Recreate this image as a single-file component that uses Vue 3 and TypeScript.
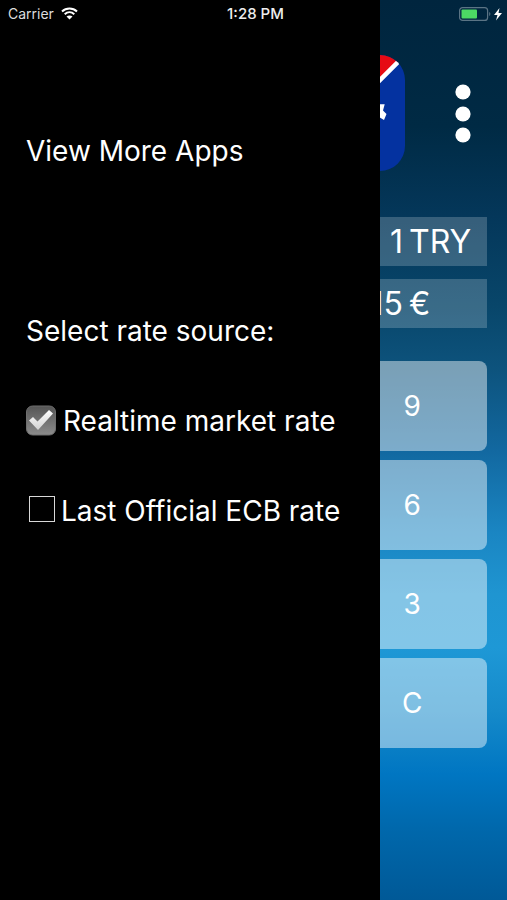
<script setup lang="ts">
import { reactive } from 'vue'

interface Source {
  id: string
  label: string
  on: boolean
}

interface Amount {
  id: string
  value: string
  unit: string
}

const sources = reactive<Source[]>([
  { id: 'realtime', label: 'Realtime market rate', on: true },
  { id: 'ecb', label: 'Last Official ECB rate', on: false },
])

const amounts: Amount[] = [
  { id: 'from', value: '1', unit: 'TRY' },
  { id: 'to', value: '15', unit: '€' },
]

const keys: string[] = ['9', '6', '3', 'C']

function choose(picked: Source): void {
  sources.forEach((s) => {
    s.on = s.id === picked.id
  })
}
</script>

<template>
  <div class="screen">
    <main class="converter">
      <header class="top">
        <svg class="logo" viewBox="0 0 116 116" aria-hidden="true">
          <defs>
            <clipPath id="logo-shape"><rect width="116" height="116" rx="25" /></clipPath>
          </defs>
          <g clip-path="url(#logo-shape)">
            <rect width="116" height="116" fill="#0432a0" />
            <path d="M0 0H116L0 116Z" fill="#e60a14" />
            <path d="M118 -2L-2 118" stroke="#fff" stroke-width="4.500" />
          </g>
          <path d="M88 49.300H95.700L94 55.500L97.500 59L95 65L90 62L88 59Z" fill="#fff" />
        </svg>
        <button class="more" type="button" aria-label="Menu">
          <svg viewBox="0 0 16 60" aria-hidden="true">
            <circle cx="8" cy="9" r="7.600" />
            <circle cx="8" cy="31" r="7.600" />
            <circle cx="8" cy="52" r="7.600" />
          </svg>
        </button>
      </header>

      <section class="amounts">
        <div v-for="a in amounts" :key="a.id" class="amount">
          <span class="value">{{ a.value }}</span>
          <span class="unit">{{ a.unit }}</span>
        </div>
      </section>

      <section class="keypad">
        <button v-for="k in keys" :key="k" class="key" type="button">{{ k }}</button>
      </section>
    </main>

    <aside class="drawer">
      <a class="row" href="#apps">View More Apps</a>
      <h2 class="row heading">Select rate source:</h2>
      <label v-for="s in sources" :key="s.id" class="row" :for="s.id">
        <span class="tick" :class="{ on: s.on }">
          <input :id="s.id" type="checkbox" :checked="s.on" @change="choose(s)" />
          <svg v-if="s.on" viewBox="0 0 30 30" aria-hidden="true">
            <defs>
              <linearGradient id="tick-face" x1="0" y1="0" x2="0" y2="1">
                <stop offset="0" stop-color="#555" />
                <stop offset="1" stop-color="#8c8c8c" />
              </linearGradient>
              <linearGradient id="tick-mark" x1="0" y1="0" x2="0" y2="1">
                <stop offset="0" stop-color="#fff" />
                <stop offset="1" stop-color="#d2d2d2" />
              </linearGradient>
            </defs>
            <rect x="0.500" y="0" width="29" height="29" rx="6" fill="url(#tick-face)" stroke="#6e6e6e" />
            <path d="M3 14.500L7 11L11.500 15.500L23 4L27 7.500L12 24Z" fill="url(#tick-mark)" />
          </svg>
          <svg v-else viewBox="0 0 30 30" aria-hidden="true">
            <rect x="3.500" y="0.500" width="25" height="25" fill="none" stroke="#d8d8d8" />
          </svg>
        </span>
        <span>{{ s.label }}</span>
      </label>
    </aside>

    <div class="status">
      <div class="carrier">
        <span>Carrier</span>
        <svg class="wifi" viewBox="0 0 17 13" aria-hidden="true">
          <path d="M1 4.500C5.200 0.500 11.800 0.500 16 4.500M3.700 7.300C6.500 4.700 10.500 4.700 13.300 7.300" />
          <path class="solid" d="M8.500 12.500L5.500 9.500C7.200 8 9.800 8 11.500 9.500Z" />
        </svg>
      </div>
      <time class="clock">1:28 PM</time>
      <svg class="battery" viewBox="0 0 44 14" aria-hidden="true">
        <rect x="0.600" y="0.600" width="28" height="12.800" rx="3" fill="none" stroke="#5b7485" stroke-width="1.200" />
        <rect x="2.500" y="2.500" width="15.500" height="9" rx="1" fill="#4cd964" />
        <path d="M30.200 5V9C31.800 8.500 31.800 5.500 30.200 5Z" fill="#5b7485" />
        <path d="M40.500 1L35 8H38.500L37 13.500L43 6H39.500Z" fill="#fff" />
      </svg>
    </div>
  </div>
</template>

<style>
body {
  margin: 0;
}
</style>

<style scoped>
.screen {
  display: grid;
  grid-template-columns: minmax(0, 1fr);
  min-height: 100vh;
  color: #fff;
  font-family: Inter, Roboto, "Liberation Sans", sans-serif;
  background: linear-gradient(
    #00253e 0%,
    #002a44 14%,
    #04375a 24%,
    #08466a 34%,
    #0d537d 41%,
    #1268a0 50%,
    #1a85c2 59%,
    #1f95d1 66%,
    #1e98d6 72%,
    #158aca 79%,
    #0076c2 86%,
    #0068ac 92%,
    #005997 100%
  );
}

.converter,
.drawer,
.status {
  grid-area: 1 / 1;
}

.converter {
  box-sizing: border-box;
  padding: 55px 20px 0;
}

.top {
  display: flex;
  align-items: center;
  justify-content: flex-end;
  gap: 50px;
  padding-right: 16px;
  height: 116px;
}

.logo {
  width: 116px;
  height: 116px;
}

.more {
  padding: 0;
  border: 0;
  background: none;
}

.more svg {
  display: block;
  width: 16px;
  height: 60px;
  fill: #fff;
}

.amounts {
  display: grid;
  gap: 13px;
  margin-top: 46px;
}

.amount {
  display: flex;
  align-items: center;
  justify-content: flex-end;
  gap: 6px;
  height: 49px;
  font-size: 32px;
  background: rgba(255, 255, 255, 0.2);
}

.unit {
  width: 78px;
}

.keypad {
  display: grid;
  grid-template-columns: repeat(3, 1fr);
  grid-auto-rows: 90px;
  gap: 9px;
  margin-top: 33px;
}

.key {
  grid-column: 3;
  padding: 0;
  border: 0;
  border-radius: 8px;
  color: #fff;
  font: inherit;
  font-size: 28px;
  background: rgba(255, 255, 255, 0.45);
}

.drawer {
  box-sizing: border-box;
  width: 75%;
  padding: 106px 0 0 26px;
  background: #000;
}

.row {
  display: flex;
  align-items: center;
  height: 90px;
  color: #fff;
  font-size: 28px;
  white-space: nowrap;
  text-decoration: none;
}

.heading {
  margin: 90px 0 0;
  font-weight: 400;
}

.tick {
  display: grid;
  margin-right: 5px;
}

.tick.on {
  margin-right: 7px;
}

.tick input,
.tick svg {
  grid-area: 1 / 1;
  width: 30px;
  height: 30px;
  margin: 0;
}

.tick input {
  appearance: none;
}

.tick svg {
  overflow: visible;
  pointer-events: none;
}

.status {
  display: grid;
  grid-template-columns: 1fr auto 1fr;
  align-items: center;
  align-self: start;
  height: 27px;
  padding: 0 4px 0 8px;
  font-size: 14px;
}

.carrier {
  display: flex;
  align-items: center;
  gap: 7px;
  color: #ddd;
}

.wifi {
  width: 17px;
  height: 13px;
  fill: none;
  stroke: #fff;
  stroke-width: 2;
}

.wifi .solid {
  fill: #fff;
  stroke: none;
}

.clock {
  font-size: 15px;
  font-weight: 500;
  color: #eee;
}

.battery {
  justify-self: end;
  width: 44px;
  height: 14px;
}
</style>
